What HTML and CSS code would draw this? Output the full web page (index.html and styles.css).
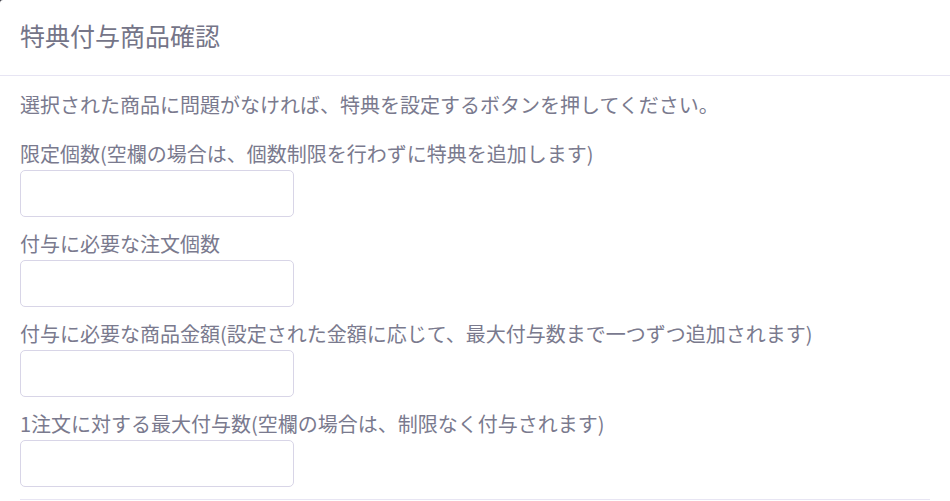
FILE: index.html
```html
<!DOCTYPE html>
<html lang="ja">
<head>
<meta charset="utf-8">
<title>特典付与商品確認</title>
<link rel="stylesheet" href="styles.css">
</head>
<body>
<div class="modal">
  <div class="modal-header">
    <h2 class="modal-title">特典付与商品確認</h2>
  </div>
  <div class="modal-body">
    <p class="lead">選択された商品に問題がなければ、特典を設定するボタンを押してください。</p>
    <div class="form-group">
      <label class="form-label">限定個数(空欄の場合は、個数制限を行わずに特典を追加します)</label>
      <input class="form-input" type="text">
    </div>
    <div class="form-group">
      <label class="form-label">付与に必要な注文個数</label>
      <input class="form-input" type="text">
    </div>
    <div class="form-group">
      <label class="form-label">付与に必要な商品金額(設定された金額に応じて、最大付与数まで一つずつ追加されます)</label>
      <input class="form-input" type="text">
    </div>
    <div class="form-group last">
      <label class="form-label">1注文に対する最大付与数(空欄の場合は、制限なく付与されます)</label>
      <input class="form-input" type="text">
    </div>
    <div class="divider"></div>
  </div>
</div>
</body>
</html>
```

FILE: styles.css
```css
html {
  background: #3a3a44;
}
body {
  margin: 0;
  font-family: "Noto Sans CJK JP", "Noto Sans", sans-serif;
  color: #7a7a8e;
}
.modal {
  background: #ffffff;
  min-height: 501px;
  border-top-left-radius: 3px;
  overflow: hidden;
}
.modal-header {
  height: 76px;
  border-bottom: 1px solid #e7e5f3;
  display: flex;
  align-items: center;
  padding: 0 20px;
  box-sizing: border-box;
}
.modal-title {
  margin: 0 0 6px 0;
  font-size: 25px;
  font-weight: 400;
  line-height: 30px;
  color: #757588;
}
.modal-body {
  padding: 17px 20px 0 20px;
}
.lead {
  margin: 0 0 25px 0;
  font-size: 20px;
  line-height: 24px;
}
.form-group {
  display: flex;
  flex-direction: column;
  align-items: flex-start;
  margin-bottom: 15px;
}
.form-group.last {
  margin-bottom: 12px;
}
.form-label {
  display: block;
  margin: 0 0 4px 0;
  font-size: 20px;
  line-height: 24px;
}
.form-input {
  width: 274px;
  height: 47px;
  box-sizing: border-box;
  border: 1px solid #d8d5e7;
  border-radius: 5px;
  background: #fff;
  margin: 0;
  padding: 0 12px;
  font-size: 16px;
  font-family: inherit;
}
.divider {
  border-top: 1px solid #e7e5f3;
}
```
